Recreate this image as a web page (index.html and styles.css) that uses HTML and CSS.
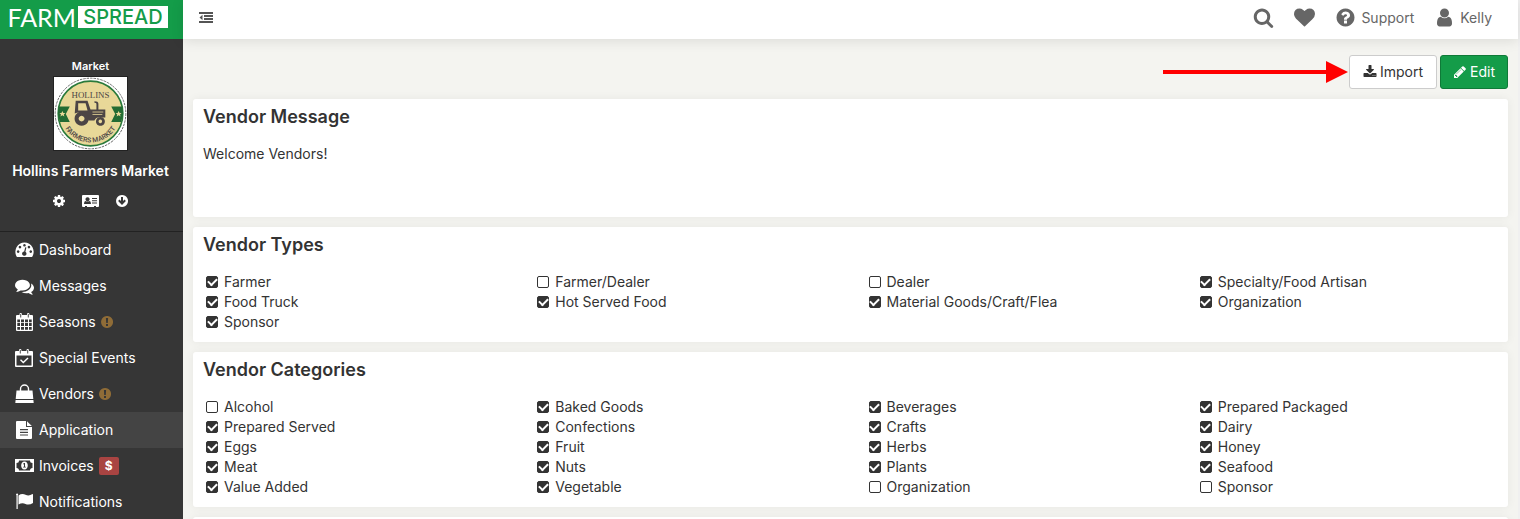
FILE: index.html
```
<!DOCTYPE html>
<html lang="en">
<head>
    <meta charset="UTF-8">
    <meta name="viewport" content="width=device-width, initial-scale=1.0">
    <title>FarmSpread - Application</title>
    <link rel="stylesheet" href="styles.css">
</head>
<body>
    <aside class="sidebar">
        <a class="brand" href="#"><span class="brand-farm">FARM</span><span class="brand-spread">SPREAD</span></a>

        <div class="profile">
            <div class="profile-type">Market</div>
            <svg class="profile-logo" viewBox="0 0 74 74" role="img" aria-label="Hollins Farmers Market">
                <rect width="74" height="74" fill="#fff"/>
                <circle cx="37" cy="37" r="35.8" fill="none" stroke="#666" stroke-width="1" stroke-dasharray="2.5 1"/>
                <circle cx="37" cy="37" r="32.8" fill="#e8d898" stroke="#2a7a3b" stroke-width="1.6"/>
                <path d="M5 30h11l-4 7.500 4 8H6q-3-8-1-15.500zM69 30H58l4 7.500-4 8h10q3-8 1-15.500z" fill="#226b33"/>
                <path d="M8.500 34.500l1 2h2l-1.600 1.400.6 2.100-2-1.200-2 1.200.6-2.100-1.600-1.400h2zM65.500 34.500l1 2h2l-1.600 1.400.6 2.100-2-1.200-2 1.200.6-2.100-1.600-1.400h2z" fill="#e8d898"/>
                <g fill="#4c4545">
                    <path fill-rule="evenodd" d="M22 24h12l3 9h6v-6q0-1-2-1v-1.500q4 0 4 2.500v6h7v8h-4q-5-1-7 3h-6q-2-7-9-8-3 0-5 1zm2.500 2.500V34H34l-2-7.500z"/>
                    <path fill-rule="evenodd" d="M28 35a7.200 7.200 0 1 0 .1 0zm0 4.200a3 3 0 1 1-.1 0z"/>
                    <path fill-rule="evenodd" d="M47 40.500a4.500 4.500 0 1 0 .1 0zm0 2.700a1.800 1.800 0 1 1-.1 0z"/>
                </g>
                <path d="M39 35.500h11M39 38h10" stroke="#e8d898" stroke-width=".8"/>
                <text class="logo-name" x="37" y="21" text-anchor="middle">HOLLINS</text>
                <path id="logoArc" d="M8 44A30 30 0 0 0 66 44" fill="none"/>
                <text class="logo-arc"><textPath href="#logoArc" startOffset="50%" text-anchor="middle">FARMERS MARKET</textPath></text>
            </svg>
            <div class="profile-name">Hollins Farmers Market</div>
            <div class="profile-links">
                <a href="#" aria-label="Settings"><svg width="14" height="14" viewBox="0 0 1792 1792"><path d="M1152 896q0-106-75-181t-181-75-181 75-75 181 75 181 181 75 181-75 75-181zm512-109v222q0 12-8 23t-20 13l-185 28q-19 54-39 91 35 50 107 138 10 12 10 25t-9 23q-27 37-99 108t-94 71q-12 0-26-9l-138-108q-44 23-91 38-16 136-29 186-7 28-36 28h-222q-14 0-24.500-8.500t-11.500-21.500l-28-184q-49-16-90-37l-141 107q-10 9-25 9-14 0-25-11-126-114-165-168-7-10-7-23 0-12 8-23 15-21 51-66.500t54-70.500q-27-50-41-99l-183-27q-13-2-21-12.500t-8-23.500v-222q0-12 8-23t19-13l186-28q14-46 39-92-40-57-107-138-10-12-10-24 0-10 9-23 26-36 98.500-107.500t94.500-71.500q13 0 26 10l138 107q44-23 91-38 16-136 29-186 7-28 36-28h222q14 0 24.500 8.500t11.500 21.500l28 184q49 16 90 37l142-107q9-9 24-9 13 0 25 10 129 119 165 170 7 8 7 22 0 12-8 23-15 21-51 66.500t-54 70.500q26 50 41 98l183 28q13 2 21 12.500t8 23.500z"/></svg></a>
                <a href="#" aria-label="Contact card"><svg width="17" height="14" viewBox="0 0 17 14"><path fill-rule="evenodd" d="M1 1h15q1 0 1 1v10q0 1-1 1h-2v-1h-2v1H5v-1H3v1H1q-1 0-1-1V2q0-1 1-1zm4.500 2.200a2.100 2.100 0 1 0 .1 0zM3.600 7Q2 7.200 2 10h7q0-2.800-1.600-3-1.900 1.400-3.800 0zM10 4v1h5V4zm0 2.200v1h5v-1zm0 2.300v1h5v-1z"/></svg></a>
                <a href="#" aria-label="Download"><svg width="14" height="14" viewBox="0 0 14 14"><path fill-rule="evenodd" d="M7 1a6 6 0 1 0 .1 0zM6 3h2v4l1.500-1.500 1.400 1.400L7 10.900 3.100 6.900l1.400-1.400L6 7z"/></svg></a>
            </div>
        </div>

        <nav class="menu">
            <a href="#">
                <svg width="19" height="18" viewBox="0 0 19 18"><path fill-rule="evenodd" d="M9.500 1.500A9.300 9.300 0 0 0 1.600 15.500q.3.500 1 .5h13.800q.7 0 1-.5A9.300 9.300 0 0 0 9.500 1.500zm0 1.500a1.300 1.300 0 1 1-.1 0zM5 4.800a1.300 1.300 0 1 1-.1 0zm9 0a1.300 1.300 0 1 1-.1 0zM3.200 9.300a1.300 1.300 0 1 1-.1 0zm12.600 0a1.300 1.300 0 1 1-.1 0zM10.200 6.200l1.200.3-1 4.200a2.200 2.200 0 1 1-1.200-.3z"/></svg>
                <span>Dashboard</span>
            </a>
            <a href="#">
                <svg width="19" height="19" viewBox="0 0 1792 1792"><path d="M1408 768q0 139-94 257t-256.500 186.500-353.500 68.500q-86 0-176-16-124 88-278 128-36 9-86 16h-3q-11 0-20.500-8t-11.500-21q-1-3-1-6.500t.5-6.500 2-6l2.500-5 3.500-5.500 4-5 4.500-5 4-4.500q5-6 23-25t26-29.500 22.500-29 25-38.500 20.500-44q-124-72-195-177t-71-224q0-139 94-257t256.500-186.500 353.500-68.500 353.500 68.500 256.500 186.500 94 257zm384 256q0 120-71 224.500t-195 176.500q10 24 20.500 44t25 38.500 22.500 29 26 29.500 23 25q1 1 4 4.500t4.500 5 4 5 3.500 5.500l2.500 5 2 6 .5 6.500-1 6.500q-3 14-13 22t-22 7q-50-7-86-16-154-40-278-128-90 16-176 16-271 0-472-132 58 4 88 4 161 0 309-45t264-129q125-92 192-212t67-254q0-77-23-152 129 71 204 178t75 230z"/></svg>
                <span>Messages</span>
            </a>
            <a href="#">
                <svg width="19" height="20" viewBox="0 0 19 20"><path fill-rule="evenodd" d="M2 3h2.500V2.200Q4.500 1 5.700 1T7 2.200V3h5v-.8Q12 1 13.200 1t1.300 1.200V3H17q1 0 1 1v14q0 1-1 1H2q-1 0-1-1V4q0-1 1-1zm3.300-1v3.500h.9V2zm7.500 0v3.500h.9V2zM2.300 7.500v2.700H5V7.500zm3.700 0v2.700h3V7.500zm4 0v2.700h3V7.500zm4 0v2.700h2.700V7.500zM2.300 11v3H5v-3zM6 11v3h3v-3zm4 0v3h3v-3zm4 0v3h2.700v-3zM2.300 15v2.800H5V15zM6 15v2.800h3V15zm4 0v2.800h3V15zm4 0v2.800h2.700V15z"/></svg>
                <span>Seasons</span>
                <svg class="alert" width="12" height="12" viewBox="0 0 12 12"><path fill-rule="evenodd" d="M6 0a6 6 0 1 0 .1 0zM4.900 2h2.200L6.800 7H5.200zM5 8h2v2H5z"/></svg>
            </a>
            <a href="#">
                <svg width="19" height="20" viewBox="0 0 19 20"><path fill-rule="evenodd" d="M1 3h3V2.200Q4 1 5.200 1t1.300 1.200V3h5v-.8Q11.500 1 12.700 1T14 2.200V3h3q1 0 1 1v14q0 1-1 1H1q-1 0-1-1V4q0-1 1-1zm3.800-1v3.500h.9V2zm7.500 0v3.500h.9V2zM1.500 7.500v10h15v-10z"/><path d="M5 12.300l1-1 2.300 2.300L12.500 9.400l1 1-5.200 5.200z"/></svg>
                <span>Special Events</span>
            </a>
            <a href="#">
                <svg width="19" height="20" viewBox="0 0 19 20"><path d="M5.500 9V5a4 4 0 0 1 8 0v4" fill="none" stroke="#fff" stroke-width="1.400"/><path d="M1.500 6.500h16l.8 8.500H.7zM.6 16h17.800l.3 3H.3z"/></svg>
                <span>Vendors</span>
                <svg class="alert" width="12" height="12" viewBox="0 0 12 12"><path fill-rule="evenodd" d="M6 0a6 6 0 1 0 .1 0zM4.900 2h2.200L6.800 7H5.200zM5 8h2v2H5z"/></svg>
            </a>
            <a class="active" href="#">
                <svg width="19" height="20" viewBox="0 0 19 20"><path fill-rule="evenodd" d="M2 1h9v6h6v11q0 1-1 1H2q-1 0-1-1V2q0-1 1-1zm3 8v1.200h8V9zm0 2.700v1.200h8v-1.200zm0 2.700v1.200h8v-1.200z"/><path d="M12 1.200L16.800 6H12z"/></svg>
                <span>Application</span>
            </a>
            <a href="#">
                <svg width="19" height="18" viewBox="0 0 19 18"><path fill-rule="evenodd" d="M0 2h19v13H0zm4 1.500Q4 6 1.500 6v5Q4 11 4 13.500h11Q15 11 17.500 11V6Q15 6 15 3.500zM9.500 4.500c4.400 0 4.400 8 0 8s-4.400-8 0-8zM7.800 6.900l.5.600.7-.4v2.600h-.9v.9h2.800v-.9H10V6h-.9z"/></svg>
                <span>Invoices</span>
                <strong class="due">$</strong>
            </a>
            <a href="#">
                <svg width="19" height="20" viewBox="0 0 19 20"><path d="M1 2.200a1.200 1.200 0 0 1 2.200 0q0 .6-.5 1V17H1.500V3.200Q1 2.800 1 2.200zM3.500 3.500Q7 1 10.500 2.800q3.500 1.500 7-.7.500 0 .5.500v8.300q-4 2.500-7.500 1-3.500-1.500-7 .6z"/></svg>
                <span>Notifications</span>
            </a>
        </nav>
    </aside>

    <div class="page">
        <header class="topbar">
            <button class="toggle" type="button" aria-label="Collapse menu"><svg width="14" height="12" viewBox="0 0 14 12"><path d="M0 0h14v2H0zM5 3h9v2H5zM5 6h9v2H5zM0 9h14v2H0zM3.500 2.700v5.600L.5 5.500z"/></svg></button>
            <div class="top-links">
                <a href="#" aria-label="Search"><svg width="21" height="21" viewBox="0 0 1792 1792"><path d="M1216 832q0-185-131.500-316.500t-316.500-131.500-316.500 131.500-131.500 316.500 131.500 316.500 316.500 131.500 316.500-131.500 131.500-316.500zm512 832q0 52-38 90t-90 38q-54 0-90-38l-343-342q-179 124-399 124-143 0-273.500-55.500t-225-150-150-225-55.500-273.500 55.500-273.500 150-225 225-150 273.500-55.500 273.500 55.500 225 150 150 225 55.500 273.500q0 220-124 399l343 343q37 37 37 90z"/></svg></a>
                <a href="#" aria-label="Favorites"><svg width="21" height="21" viewBox="0 0 1792 1792"><path d="M896 1664q-26 0-44-18l-624-602q-10-8-27.500-26t-55.500-65.500-68-97.500-53.500-121-23.500-138q0-220 127-344t351-124q62 0 126.500 21.500t120 58 95.500 68.500 76 68q36-36 76-68t95.500-68.500 120-58 126.500-21.500q224 0 351 124t127 344q0 221-229 450l-623 600q-18 18-44 18z"/></svg></a>
                <a href="#"><svg width="21" height="21" viewBox="0 0 1792 1792"><path d="M1024 1376v-192q0-14-9-23t-23-9h-192q-14 0-23 9t-9 23v192q0 14 9 23t23 9h192q14 0 23-9t9-23zm256-672q0-88-55.500-163t-138.500-116-170-41q-243 0-371 213-15 24 8 42l132 100q7 6 19 6 16 0 25-12 53-68 86-92 34-24 86-24 48 0 85.500 26t37.500 59q0 38-20 61t-68 45q-63 28-115.500 86.500t-52.500 125.500v36q0 14 9 23t23 9h192q14 0 23-9t9-23q0-19 21.500-49.500t54.500-49.500q32-18 49-28.500t46-35 44.500-48 28-60.500 12.500-81zm384 192q0 209-103 385.500t-279.500 279.500-385.500 103-385.500-103-279.500-279.500-103-385.500 103-385.500 279.500-279.500 385.500-103 385.500 103 279.500 279.500 103 385.500z"/></svg><span>Support</span></a>
                <a href="#"><svg width="21" height="21" viewBox="0 0 1792 1792"><path d="M1536 1399q0 109-62.500 187t-150.500 78h-854q-88 0-150.500-78t-62.500-187q0-85 8.500-160.500t31.500-152 58.500-131 94-89 134.500-34.500q131 128 313 128t313-128q76 0 134.500 34.500t94 89 58.500 131 31.500 152 8.500 160.500zm-256-887q0 159-112.500 271.500t-271.500 112.500-271.500-112.500-112.500-271.500 112.500-271.500 271.500-112.500 271.500 112.500 112.500 271.500z"/></svg><span>Kelly</span></a>
            </div>
        </header>

        <main class="content">
            <div class="actions">
                <svg class="pointer" width="185" height="22" viewBox="0 0 185 22"><path d="M0 9h163V0l22 11-22 11v-9H0z"/></svg>
                <button class="btn" type="button"><svg width="14" height="14" viewBox="0 0 1792 1792"><path d="M1344 1344q0-26-19-45t-45-19-45 19-19 45 19 45 45 19 45-19 19-45zm256 0q0-26-19-45t-45-19-45 19-19 45 19 45 45 19 45-19 19-45zm128-224v320q0 40-28 68t-68 28h-1472q-40 0-68-28t-28-68v-320q0-40 28-68t68-28h465l135 136q58 56 136 56t136-56l136-136h464q40 0 68 28t28 68zm-325-569q17 41-14 70l-448 448q-18 19-45 19t-45-19l-448-448q-31-29-14-70 17-39 59-39h256v-448q0-26 19-45t45-19h256q26 0 45 19t19 45v448h256q42 0 59 39z"/></svg>Import</button>
                <button class="btn btn-edit" type="button"><svg width="14" height="14" viewBox="0 0 1792 1792"><path d="M491 1536l91-91-235-235-91 91v107h128v128h107zm523-928q0-22-22-22-10 0-17 7l-542 542q-7 7-7 17 0 22 22 22 10 0 17-7l542-542q7-7 7-17zm-54-192l416 416-832 832h-416v-416zm683 96q0 53-37 90l-166 166-416-416 166-165q36-38 90-38 53 0 91 38l235 234q37 39 37 91z"/></svg>Edit</button>
            </div>

            <section class="panel panel-message">
                <h3>Vendor Message</h3>
                <p>Welcome Vendors!</p>
            </section>

            <section class="panel">
                <h3>Vendor Types</h3>
                <div class="checks">
                    <label><input type="checkbox" checked>Farmer</label>
                    <label><input type="checkbox">Farmer/Dealer</label>
                    <label><input type="checkbox">Dealer</label>
                    <label><input type="checkbox" checked>Specialty/Food Artisan</label>
                    <label><input type="checkbox" checked>Food Truck</label>
                    <label><input type="checkbox" checked>Hot Served Food</label>
                    <label><input type="checkbox" checked>Material Goods/Craft/Flea</label>
                    <label><input type="checkbox" checked>Organization</label>
                    <label><input type="checkbox" checked>Sponsor</label>
                </div>
            </section>

            <section class="panel">
                <h3>Vendor Categories</h3>
                <div class="checks">
                    <label><input type="checkbox">Alcohol</label>
                    <label><input type="checkbox" checked>Baked Goods</label>
                    <label><input type="checkbox" checked>Beverages</label>
                    <label><input type="checkbox" checked>Prepared Packaged</label>
                    <label><input type="checkbox" checked>Prepared Served</label>
                    <label><input type="checkbox" checked>Confections</label>
                    <label><input type="checkbox" checked>Crafts</label>
                    <label><input type="checkbox" checked>Dairy</label>
                    <label><input type="checkbox" checked>Eggs</label>
                    <label><input type="checkbox" checked>Fruit</label>
                    <label><input type="checkbox" checked>Herbs</label>
                    <label><input type="checkbox" checked>Honey</label>
                    <label><input type="checkbox" checked>Meat</label>
                    <label><input type="checkbox" checked>Nuts</label>
                    <label><input type="checkbox" checked>Plants</label>
                    <label><input type="checkbox" checked>Seafood</label>
                    <label><input type="checkbox" checked>Value Added</label>
                    <label><input type="checkbox" checked>Vegetable</label>
                    <label><input type="checkbox">Organization</label>
                    <label><input type="checkbox">Sponsor</label>
                </div>
            </section>

            <section class="panel"></section>
        </main>
    </div>
</body>
</html>
```
FILE: styles.css
```
* {
    box-sizing: border-box;
}

body {
    margin: 0;
    display: flex;
    min-height: 100vh;
    font-family: Inter, "Open Sans", sans-serif;
    font-size: 14px;
    line-height: 20px;
    color: #333;
    background-color: #f4f4f0;
}

a {
    color: inherit;
    text-decoration: none;
}

svg {
    fill: currentColor;
    flex-shrink: 0;
}

button {
    font: inherit;
    cursor: pointer;
}

/* sidebar */
.sidebar {
    flex: 0 0 183px;
    background-color: #363636;
    color: #fff;
}

.brand {
    display: flex;
    align-items: center;
    justify-content: flex-end;
    gap: 2px;
    height: 39px;
    padding: 0 15px 5px 0;
    background-color: #149c49;
}

.brand-farm {
    font-family: Lato, sans-serif;
    font-size: 25px;
    line-height: 22px;
}

.brand-spread {
    width: 90px;
    background-color: #fff;
    color: #149c49;
    font-size: 20px;
    font-weight: 500;
    line-height: 22px;
    text-align: center;
}

.profile {
    display: flex;
    flex-direction: column;
    align-items: center;
    height: 193px;
    padding: 17px 2px 0 0;
    border-bottom: 1px solid #222;
}

.profile-type {
    font-size: 11px;
    font-weight: 600;
}

.profile-logo {
    width: 75px;
    height: 75px;
    border: 1px solid #222;
}

.logo-name {
    font-family: "Liberation Serif", serif;
    font-size: 9px;
    fill: #4c4545;
}

.logo-arc {
    font-family: Roboto, sans-serif;
    font-size: 7px;
    font-weight: 500;
    fill: #4c4545;
}

.profile-name {
    margin-top: 10px;
    font-weight: 600;
}

.profile-links {
    display: flex;
    gap: 16px;
    margin-top: 12px;
}

.menu a {
    display: flex;
    align-items: center;
    height: 36px;
    padding-left: 15px;
}

.menu a.active {
    background-color: #444;
}

.menu span {
    margin-left: 5px;
}

.alert {
    margin-left: 5px;
    color: #8f6c37;
}

.due {
    width: 20px;
    margin-left: 5px;
    border-radius: 2px;
    background-color: #a94442;
    font-size: 12px;
    line-height: 18px;
    text-align: center;
}

/* right side */
.page {
    flex: 1;
    min-width: 0;
    border-right: 2px solid #f0f0f0;
}

.topbar {
    display: flex;
    align-items: center;
    justify-content: space-between;
    height: 39px;
    padding: 0 26px 4px 16px;
    background-color: #fff;
    box-shadow: 0 2px 12px rgba(0, 0, 0, 0.1);
    color: #666;
}

.toggle {
    display: flex;
    padding: 0;
    border: 0;
    background: none;
    color: #555;
}

.top-links,
.top-links a {
    display: flex;
    align-items: center;
}

.top-links {
    gap: 20px;
}

.top-links span {
    margin-left: 5px;
}

.content {
    padding: 16px 10px 0;
}

.actions {
    display: flex;
    align-items: center;
    justify-content: flex-end;
    gap: 3px;
    margin-bottom: 10px;
}

.pointer {
    margin-right: -2px;
    color: #f00;
}

.btn {
    display: flex;
    align-items: center;
    gap: 3px;
    height: 34px;
    padding: 0 13px;
    border: 1px solid #ccc;
    border-radius: 3px;
    background-color: #fff;
    color: #333;
}

.btn-edit {
    padding: 0 12px;
    border-color: #0f7a38;
    background-color: #149c49;
    color: #fff;
}

.panel {
    margin-bottom: 10px;
    padding: 8px 10px 10px;
    border-radius: 3px;
    background-color: #fff;
    box-shadow: 0 0 10px rgba(0, 0, 0, 0.06);
}

.panel-message {
    min-height: 118px;
}

.panel h3 {
    margin: 0 0 17px;
    font-size: 18px;
    font-weight: 600;
    line-height: 20px;
}

.panel p {
    margin: 0;
}

.checks {
    display: grid;
    grid-template-columns: repeat(4, 1fr);
    margin: 0 -15px;
}

.checks label {
    display: flex;
    align-items: center;
    padding: 0 15px;
}

.checks input {
    appearance: none;
    display: grid;
    place-items: center;
    width: 12px;
    height: 12px;
    margin: 0 6px 0 3px;
    border: 1px solid #333;
    border-radius: 2px;
}

.checks input:checked {
    background-color: #333;
}

/* tick mark */
.checks input:checked::after {
    content: "";
    width: 7px;
    height: 4px;
    margin-bottom: 2px;
    border: solid #fff;
    border-width: 0 0 2px 2px;
    transform: rotate(-45deg);
}
```
